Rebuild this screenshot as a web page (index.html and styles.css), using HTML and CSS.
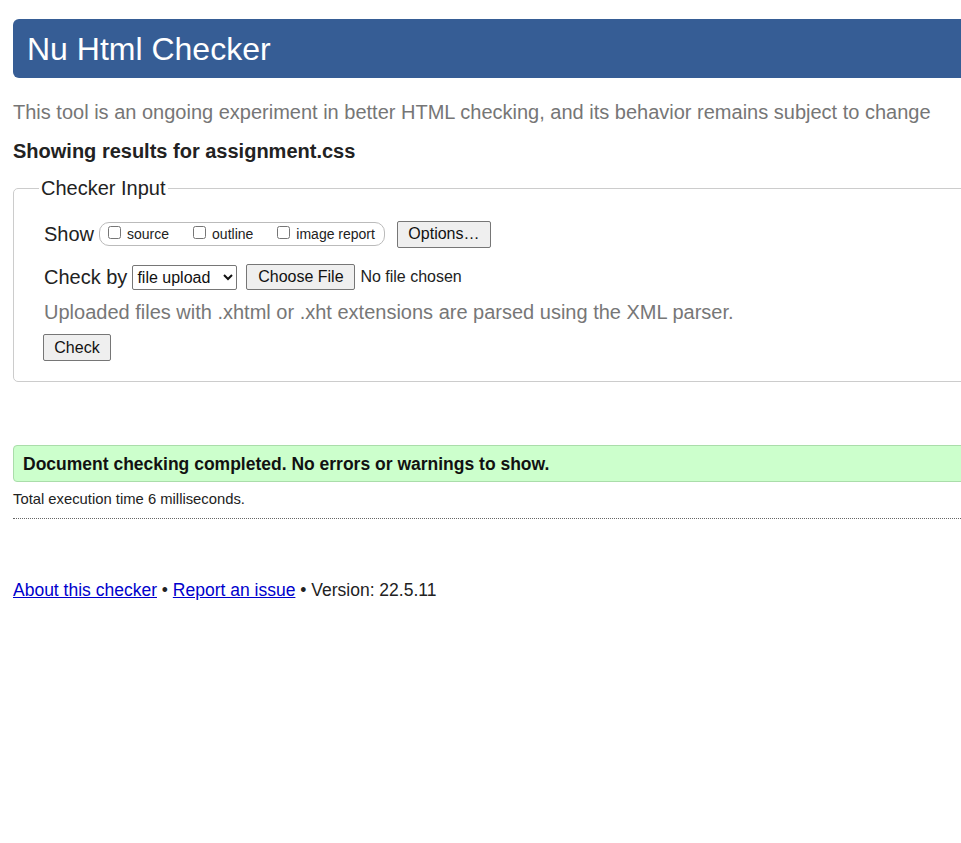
FILE: index.html
```html
<!DOCTYPE html>
<html lang="en">
<head>
<meta charset="utf-8">
<title>Nu Html Checker</title>
<link rel="stylesheet" href="styles.css">
</head>
<body>
<div class="page">
  <h1 class="title-bar">Nu Html Checker</h1>
  <p class="intro">This tool is an ongoing experiment in better HTML checking, and its behavior remains subject to change</p>
  <p class="showing">Showing results for assignment.css</p>
  <fieldset class="checker">
    <legend>Checker Input</legend>
    <div class="row">
      <span class="row-label">Show</span>
      <span class="pill">
        <label class="opt"><input type="checkbox">source</label>
        <label class="opt"><input type="checkbox">outline</label>
        <label class="opt"><input type="checkbox">image report</label>
      </span>
      <button class="btn btn-options" type="button">Options…</button>
    </div>
    <div class="row row-check">
      <span class="row-label">Check by</span>
      <select class="sel"><option>file upload</option></select>
      <span class="file"><button class="btn btn-file" type="button">Choose File</button><span class="nofile">No file chosen</span></span>
    </div>
    <p class="note">Uploaded files with .xhtml or .xht extensions are parsed using the XML parser.</p>
    <button class="btn btn-check" type="button">Check</button>
  </fieldset>
  <div class="success">Document checking completed. No errors or warnings to show.</div>
  <p class="stats">Total execution time 6 milliseconds.</p>
  <p class="footer"><a href="#">About this checker</a> • <a href="#">Report an issue</a> • Version: 22.5.11</p>
</div>
</body>
</html>
```
FILE: styles.css
```css
html { overflow: hidden; background: #fff; }
body {
  margin: 0;
  font-family: "Liberation Sans", Arial, sans-serif;
  color: #222;
}
.page {
  width: 1100px;
  padding: 19px 0 0 13px;
}
.title-bar {
  margin: 0;
  height: 59px;
  box-sizing: border-box;
  padding: 13px 14px 0;
  background: #365d95;
  color: #fff;
  font-size: 32px;
  font-weight: normal;
  line-height: 34px;
  border-radius: 6px 0 0 6px;
}
.intro {
  margin: 22px 0 0;
  font-size: 20px;
  line-height: 24px;
  color: #767676;
}
.showing {
  margin: 15px 0 0;
  font-size: 20px;
  line-height: 24px;
  font-weight: bold;
  color: #222;
}
.checker {
  margin: 14px 0 0;
  border: 1px solid #cccccc;
  border-radius: 5px 0 0 5px;
  padding: 0 0 20px 30px;
  min-inline-size: 0;
}
.checker legend {
  margin-left: -5px;
  padding: 0 2px;
  font-size: 20px;
  line-height: 22px;
  color: #222;
}
.row {
  display: flex;
  align-items: center;
  height: 28px;
  margin-top: 21px;
}
.row-label {
  font-size: 20px;
  color: #222;
  margin-right: 5px;
}
.pill {
  display: inline-flex;
  align-items: center;
  height: 22px;
  border: 1px solid #bbb;
  border-radius: 10px;
  padding: 0 9px 0 8px;
  margin-right: 12px;
}
.opt {
  display: inline-flex;
  align-items: center;
  font-size: 14px;
  color: #222;
  margin-right: 24px;
}
.opt:last-child { margin-right: 0; }
.opt input {
  margin: 0 6px 4px 0;
  width: 13px;
  height: 13px;
}
.btn {
  font-family: "Liberation Sans", Arial, sans-serif;
  font-size: 16px;
  color: #111;
  background: #efefef;
  border: 1px solid #767676;
  border-radius: 2px;
  padding: 0 9px;
  height: 27px;
}
.btn-options { width: 94px; }
.row-check { margin-top: 16px; height: 26px; }
.sel {
  font-family: "Liberation Sans", Arial, sans-serif;
  font-size: 16px;
  color: #111;
  height: 25px;
  width: 105px;
  border: 1px solid #767676;
  border-radius: 2px;
  background: #fff;
  margin-right: 9px;
}
.file { display: inline-flex; align-items: center; font-size: 16px; }
.btn-file { height: 26px; width: 109px; padding: 0; margin-right: 5px; }
.nofile { color: #222; }
.note {
  margin: 10px 0 0;
  font-size: 20px;
  line-height: 24px;
  color: #777;
}
.btn-check {
  margin-top: 10px;
  margin-left: -1px;
  width: 68px;
  padding: 0;
  display: block;
}
.success {
  margin-top: 63px;
  height: 37px;
  box-sizing: border-box;
  background: #ccffcc;
  border: 1px solid #aaddaa;
  border-radius: 4px 0 0 4px;
  padding: 8px 9px 0;
  font-size: 17.5px;
  line-height: 20px;
  font-weight: bold;
  color: #111;
}
.stats {
  margin: 0;
  padding: 9px 0 10px;
  font-size: 14.8px;
  line-height: 17px;
  color: #222;
  border-bottom: 1px dotted #666;
}
.footer {
  margin: 60px 0 0;
  font-size: 17.5px;
  line-height: 22px;
  color: #222;
}
.footer a { color: #0000cc; }
```
